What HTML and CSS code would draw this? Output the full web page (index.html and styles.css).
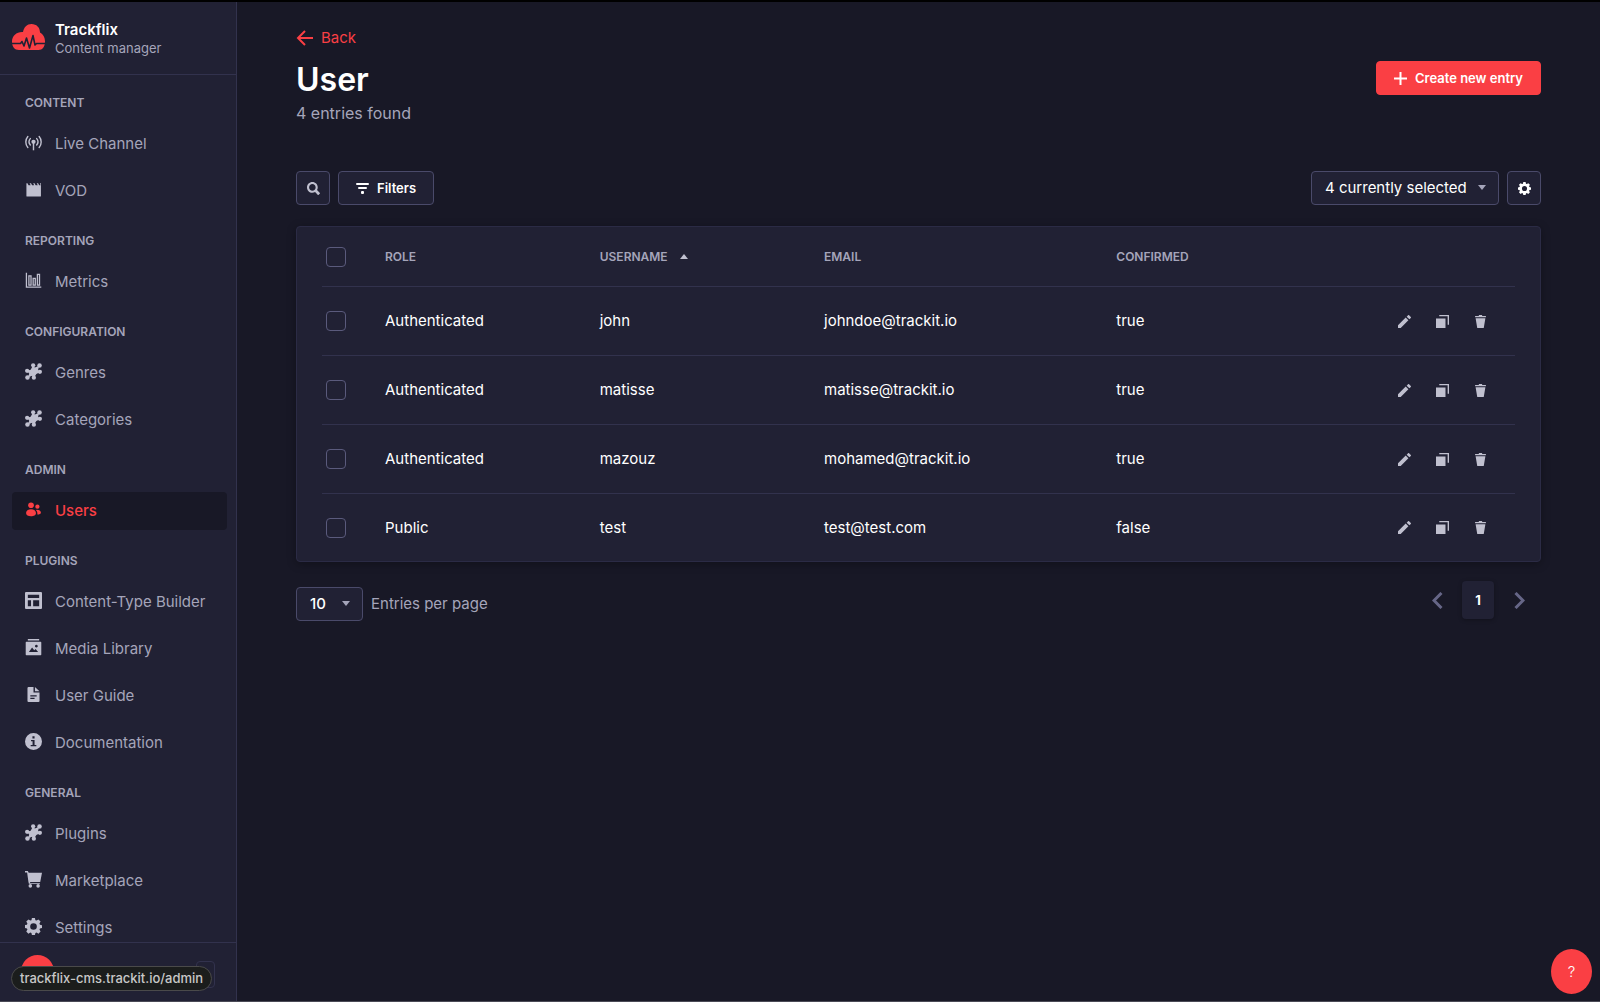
FILE: index.html
```html
<!DOCTYPE html>
<html lang="en">
<head>
<meta charset="utf-8">
<title>Trackflix - User</title>
<link rel="stylesheet" href="styles.css">
</head>
<body>
<svg class="sprite" aria-hidden="true">
  <symbol id="puzzle" viewBox="0 0 24 24"><path d="m11 4 3 2.500L20 4l-1.500 5.500L21 13l-5 2.500-3.500 5.500L10 18l-6 2.500L6 15l-3-4 5-1.500Z"/><circle cx="11.500" cy="3.300" r="3"/><circle cx="20.500" cy="3.500" r="3.200"/><circle cx="21" cy="12.500" r="3"/><circle cx="3" cy="11" r="3"/><circle cx="3.500" cy="20.500" r="3.200"/><circle cx="12.500" cy="20.800" r="3"/></symbol>
  <symbol id="gear" viewBox="0 0 24 24"><path fill-rule="evenodd" d="m9.800 0-.7 3-1.600.7-2.700-1.600-3 3 1.600 2.700-.6 1.600-3 .7v4l3 .7.6 1.600-1.600 2.700 3 3 2.700-1.600 1.600.6.7 3h4.200l.7-3 1.600-.6 2.700 1.600 3-3-1.600-2.700.7-1.600 3-.7v-4l-3-.7-.7-1.600L22 5.100l-3-3-2.700 1.600-1.600-.7-.7-3H9.800ZM12 7.300a4.700 4.700 0 1 1 0 9.400 4.700 4.700 0 0 1 0-9.400Z"/></symbol>
  <symbol id="pencil" viewBox="0 0 24 24"><path d="M23.604 3.514c.528.528.528 1.360 0 1.887l-2.622 2.607-4.990-4.990L18.600.396a1.322 1.322 0 0 1 1.887 0l3.118 3.118ZM0 24v-4.990l14.200-14.200 4.990 4.990L4.990 24H0Z"/></symbol>
  <symbol id="copy" viewBox="0 0 24 24"><path d="M0 6.500h17.500V24H0ZM6 0h18v18h-2.500V2.500H6Z"/></symbol>
  <symbol id="trash" viewBox="0 0 24 24"><path d="M3.236 6.149a.2.2 0 0 0-.197.233L6 24h12l2.960-17.618a.2.2 0 0 0-.196-.233H3.236ZM21.800 1.983c.11 0 .2.090.2.200v1.584a.2.2 0 0 1-.2.200H2.200a.2.2 0 0 1-.2-.2V2.183c0-.11.09-.2.200-.2h5.511c.9 0 1.631-1.090 1.631-1.983h5.316c0 .894.730 1.983 1.631 1.983H21.800Z"/></symbol>
  <symbol id="caret" viewBox="0 0 10 6"><path d="M0 0h10L5 6Z"/></symbol>
</svg>

<div class="app">
  <aside class="sidebar">
    <header class="brand">
      <svg class="brand-logo" viewBox="0 0 33 27" aria-hidden="true">
        <path fill="#fa3f44" d="M7 26C2.500 26 0 22.500 0 17.500 0 11.500 5 7.500 11 8 12 3 15 0 19.500 0c5 0 8.500 3.500 8.500 8.500 3 1.500 5 5 5 9 0 5-2.500 8.500-6.500 8.500Z"/>
        <path fill="none" stroke="#212134" stroke-width="1.600" stroke-linecap="round" stroke-linejoin="round" d="M0 19.500h8.500l1.500-2 2 4.500 2.500-8L17.500 24 21 11.500l2 9.500 1.500-1.500H33"/>
      </svg>
      <div class="brand-text">
        <strong class="brand-name">Trackflix</strong>
        <span class="brand-sub">Content manager</span>
      </div>
    </header>

    <nav class="nav">
      <section class="nav-section">
        <h2 class="nav-title">Content</h2>
        <ul class="nav-list">
          <li><a class="nav-link" href="#"><svg class="icon" viewBox="0 0 24 24"><circle cx="12" cy="11" r="3"/><path d="M11 12h2v11h-2z"/><path fill="none" stroke="currentColor" stroke-width="2" stroke-linecap="round" d="M7.500 6.500a7 7 0 0 0 0 9M16.500 6.500a7 7 0 0 1 0 9M4 3.500a12 12 0 0 0 0 15.500M20 3.500a12 12 0 0 1 0 15.500"/></svg>Live Channel</a></li>
          <li><a class="nav-link" href="#"><svg class="icon" viewBox="0 0 24 24"><path d="M2 3h1.500l1.500 3h3L6.500 3h2L10 6h3l-1.500-3h2L15 6h3l-1.500-3h2L20 6h2l-1-3h1.500v18a1 1 0 0 1-1 1H3a1 1 0 0 1-1-1Z"/></svg>VOD</a></li>
        </ul>
      </section>
      <section class="nav-section">
        <h2 class="nav-title">Reporting</h2>
        <ul class="nav-list">
          <li><a class="nav-link" href="#"><svg class="icon" viewBox="0 0 24 24"><path fill="none" stroke="currentColor" stroke-width="1.800" d="M2 1v20.500h21M5.500 5.500h3v13h-3zM11.500 9h3v9.500h-3zM17.500 3.500h3v15h-3z"/></svg>Metrics</a></li>
        </ul>
      </section>
      <section class="nav-section">
        <h2 class="nav-title">Configuration</h2>
        <ul class="nav-list">
          <li><a class="nav-link" href="#"><svg class="icon"><use href="#puzzle"/></svg>Genres</a></li>
          <li><a class="nav-link" href="#"><svg class="icon"><use href="#puzzle"/></svg>Categories</a></li>
        </ul>
      </section>
      <section class="nav-section">
        <h2 class="nav-title">Admin</h2>
        <ul class="nav-list">
          <li><a class="nav-link active" href="#" aria-current="page"><svg class="icon" viewBox="0 0 24 24"><circle cx="8.500" cy="6" r="4"/><circle cx="17.500" cy="8" r="3"/><path d="M1.500 17c0-3.500 3-5.500 7-5.500s7 2 7 5.500-3 4.500-7 4.500-7-1-7-4.500ZM16.500 12.500c3.500 0 6 1.800 6 4 0 1.500-2 2.500-5 2.500 0-2.500-.2-4.500-2-6Z"/></svg>Users</a></li>
        </ul>
      </section>
      <section class="nav-section">
        <h2 class="nav-title">Plugins</h2>
        <ul class="nav-list">
          <li><a class="nav-link" href="#"><svg class="icon" viewBox="0 0 24 24"><path fill-rule="evenodd" d="M1.500 0h21A1.500 1.500 0 0 1 24 1.500v21a1.500 1.500 0 0 1-1.500 1.500h-21A1.500 1.500 0 0 1 0 22.500v-21A1.500 1.500 0 0 1 1.500 0ZM4 4v4.500h16V4ZM4 11.500V20h4.500v-8.500ZM11.500 11.500V20H20v-8.500Z"/></svg>Content-Type Builder</a></li>
          <li><a class="nav-link" href="#"><svg class="icon" viewBox="0 0 24 24"><path fill-rule="evenodd" d="M4 0h16v2H4ZM2 4h20a1 1 0 0 1 1 1v17a1 1 0 0 1-1 1H2a1 1 0 0 1-1-1V5a1 1 0 0 1 1-1ZM5.500 18.500h13l-3.500-4.500-2 2-3-4ZM16 8a2 2 0 1 0 .1 0Z"/></svg>Media Library</a></li>
          <li><a class="nav-link" href="#"><svg class="icon" viewBox="0 0 24 24"><path fill-rule="evenodd" d="M5 1.500h7V9h8.500v12a1.500 1.500 0 0 1-1.500 1.500H5A1.500 1.500 0 0 1 3.500 21V3A1.500 1.500 0 0 1 5 1.500ZM7.500 13v1.800h9V13ZM7.500 16.500v1.800h6v-1.800Z"/><path d="m14 1.500 6.500 5.800H14Z"/></svg>User Guide</a></li>
          <li><a class="nav-link" href="#"><svg class="icon" viewBox="0 0 24 24"><path fill-rule="evenodd" d="M12 0a12 12 0 1 1 0 24 12 12 0 0 1 0-24ZM10.500 4.500v3.200h3V4.500ZM8.500 9.800v1.800h2.200v5.200H8v1.800h8v-1.800h-2.500v-7Z"/></svg>Documentation</a></li>
        </ul>
      </section>
      <section class="nav-section">
        <h2 class="nav-title">General</h2>
        <ul class="nav-list">
          <li><a class="nav-link" href="#"><svg class="icon"><use href="#puzzle"/></svg>Plugins</a></li>
          <li><a class="nav-link" href="#"><svg class="icon" viewBox="0 0 24 24"><path d="M0 0h4l1.200 2.500H24L21.500 15.500H7.500L7 17h14v1H5.500L4.800 15 3 2.200H0Z"/><circle cx="7.500" cy="21" r="2.500"/><circle cx="18.500" cy="21" r="2.500"/></svg>Marketplace</a></li>
          <li><a class="nav-link" href="#"><svg class="icon"><use href="#gear"/></svg>Settings</a></li>
        </ul>
      </section>
    </nav>

    <footer class="side-foot">
      <span class="avatar"></span>
      <button class="collapse" aria-label="Collapse menu"></button>
      <span class="status">trackflix-cms.trackit.io/admin</span>
    </footer>
  </aside>

  <main class="main">
    <a class="back" href="#"><svg class="back-icon" viewBox="0 0 17 16" aria-hidden="true"><path fill="none" stroke="currentColor" stroke-width="2" d="M17 8H2M9 1 2 8l7 7"/></svg>Back</a>
    <header class="page-head">
      <div>
        <h1 class="page-title">User</h1>
        <p class="page-sub">4 entries found</p>
      </div>
      <button class="btn primary"><svg class="plus" viewBox="0 0 13 13" aria-hidden="true"><path d="M5.500 0h2v5.500H13v2H7.500V13h-2V7.500H0v-2h5.500Z"/></svg>Create new entry</button>
    </header>

    <div class="toolbar">
      <button class="btn square" aria-label="Search"><svg class="icon-sm" viewBox="0 0 24 24"><path d="m23.813 20.163-5.300-5.367a9.792 9.792 0 0 0 1.312-4.867C19.825 4.455 15.375 0 9.913 0 4.450 0 0 4.455 0 9.929c0 5.473 4.450 9.928 9.912 9.928a9.757 9.757 0 0 0 5.007-1.400l5.275 5.350a.634.634 0 0 0 .913 0l2.706-2.737a.641.641 0 0 0 0-.907ZM9.910 3.867c3.338 0 6.050 2.718 6.050 6.061s-2.712 6.061-6.050 6.061c-3.337 0-6.050-2.718-6.050-6.060 0-3.344 2.713-6.062 6.050-6.062Z"/></svg></button>
      <button class="btn filters"><svg class="icon-sm" viewBox="0 0 13 13" aria-hidden="true"><rect y="1" width="13" height="2" rx="1"/><rect x="2" y="5" width="9" height="2" rx="1"/><rect x="5" y="9" width="3" height="3" rx="1"/></svg>Filters</button>
      <div class="toolbar-end">
        <div class="select fields"><select aria-label="Displayed fields"><option>4 currently selected</option></select><svg class="caret"><use href="#caret"/></svg></div>
        <button class="btn square light" aria-label="Configure the view"><svg class="icon-sm"><use href="#gear"/></svg></button>
      </div>
    </div>

    <div class="card">
      <table class="table">
        <thead>
          <tr>
            <th class="col-check"><input type="checkbox" aria-label="Select all entries"></th>
            <th class="col-role">Role</th>
            <th class="col-name">Username<svg class="sort" viewBox="0 0 8 5" aria-hidden="true"><path d="M0 5h8L4 0Z"/></svg></th>
            <th class="col-email">Email</th>
            <th>Confirmed</th>
            <th class="col-actions"></th>
          </tr>
        </thead>
        <tbody>
          <tr><td><input type="checkbox" aria-label="Select john"></td><td>Authenticated</td><td>john</td><td>johndoe@trackit.io</td><td>true</td><td><div class="actions"><button aria-label="Edit"><svg><use href="#pencil"/></svg></button><button aria-label="Duplicate"><svg><use href="#copy"/></svg></button><button aria-label="Delete"><svg><use href="#trash"/></svg></button></div></td></tr>
          <tr><td><input type="checkbox" aria-label="Select matisse"></td><td>Authenticated</td><td>matisse</td><td>matisse@trackit.io</td><td>true</td><td><div class="actions"><button aria-label="Edit"><svg><use href="#pencil"/></svg></button><button aria-label="Duplicate"><svg><use href="#copy"/></svg></button><button aria-label="Delete"><svg><use href="#trash"/></svg></button></div></td></tr>
          <tr><td><input type="checkbox" aria-label="Select mazouz"></td><td>Authenticated</td><td>mazouz</td><td>mohamed@trackit.io</td><td>true</td><td><div class="actions"><button aria-label="Edit"><svg><use href="#pencil"/></svg></button><button aria-label="Duplicate"><svg><use href="#copy"/></svg></button><button aria-label="Delete"><svg><use href="#trash"/></svg></button></div></td></tr>
          <tr><td><input type="checkbox" aria-label="Select test"></td><td>Public</td><td>test</td><td>test@test.com</td><td>false</td><td><div class="actions"><button aria-label="Edit"><svg><use href="#pencil"/></svg></button><button aria-label="Duplicate"><svg><use href="#copy"/></svg></button><button aria-label="Delete"><svg><use href="#trash"/></svg></button></div></td></tr>
        </tbody>
      </table>
    </div>

    <div class="pager">
      <div class="page-size">
        <div class="select size"><select id="page-size"><option>10</option></select><svg class="caret"><use href="#caret"/></svg></div>
        <label for="page-size">Entries per page</label>
      </div>
      <nav class="pages" aria-label="Pagination">
        <a class="page-arrow" href="#" aria-label="Previous page"><svg viewBox="0 0 11 17"><path d="M9.500 1 2 8.500 9.500 16"/></svg></a>
        <a class="page-number" href="#" aria-current="page">1</a>
        <a class="page-arrow" href="#" aria-label="Next page"><svg viewBox="0 0 11 17"><path d="M1.500 1 9 8.500 1.500 16"/></svg></a>
      </nav>
    </div>
  </main>
  <button class="help" aria-label="Help">?</button>
</div>
</body>
</html>
```
FILE: styles.css
```css
* { box-sizing: border-box; }

body {
  margin: 0;
  background: #181826;
  color: #fff;
  font: 400 15px/20px Inter, "Liberation Sans", sans-serif;
}

button, select { font: inherit; color: inherit; }
button { padding: 0; border: 0; background: none; }
a { color: inherit; text-decoration: none; }
h1, h2, p, ul { margin: 0; padding: 0; }
ul { list-style: none; }
svg { display: block; flex: none; fill: currentColor; }
.sprite { display: none; }

.app {
  display: flex;
  height: 100vh;
  border-top: 2px solid #000;
  border-bottom: 1px solid #4a4a56;
}

/* Sidebar */
.sidebar {
  display: flex;
  flex: none;
  flex-direction: column;
  width: 237px;
  border-right: 1px solid #32324d;
  background: #212134;
  color: #a5a5ba;
}
.brand {
  display: flex;
  gap: 10px;
  height: 73px;
  padding: 18px 12px 0;
  border-bottom: 1px solid #32324d;
}
.brand-logo { width: 33px; height: 27px; margin-top: 4px; }
.brand-text { display: flex; flex-direction: column; }
.brand-name { color: #fff; font-weight: 600; }
.brand-sub { font-size: 13px; line-height: 16px; }

.nav {
  display: flex;
  flex: 1;
  flex-direction: column;
  gap: 23px;
  min-height: 0;
  padding: 20px 9px 0 12px;
  overflow: hidden;
}
.nav-section { flex: none; }
.nav-title {
  margin-bottom: 14px;
  padding-left: 13px;
  font-size: 12px;
  font-weight: 600;
  line-height: 16px;
  text-transform: uppercase;
}
.nav-list { display: grid; gap: 9px; }
.nav-link {
  display: flex;
  align-items: center;
  gap: 13px;
  height: 38px;
  padding: 0 13px;
  border-radius: 4px;
}
.nav-link.active { background: #181826; color: #fa3f44; font-weight: 500; }
.icon { width: 17px; height: 17px; margin-bottom: 3px; color: #c0c0cf; }
.active .icon { color: inherit; }

.side-foot {
  position: relative;
  display: flex;
  flex: none;
  justify-content: space-between;
  height: 59px;
  padding: 12px 21px 0;
  border-top: 1px solid #32324d;
}
.avatar { width: 33px; height: 33px; border-radius: 50%; background: #fa3f44; }
.collapse { width: 19px; height: 27px; margin-top: 6px; border: 1px solid #32324d; border-radius: 4px; }
.status {
  position: absolute;
  left: 11px;
  bottom: 10px;
  height: 25px;
  padding: 0 8px;
  border: 1px solid #4a4a4a;
  border-radius: 13px;
  background: #1b1d1c;
  color: #c8c8c8;
  font-size: 13px;
  font-weight: 500;
  line-height: 23px;
}

/* Main column */
.main { flex: 1; min-width: 0; padding: 26px 59px 0; }
.back { display: inline-flex; align-items: center; gap: 8px; color: #fa3f44; }
.back-icon { width: 17px; height: 16px; }
.page-head { display: flex; align-items: flex-start; justify-content: space-between; margin-top: 8px; }
.page-title { font-size: 32px; font-weight: 600; line-height: 42px; }
.page-sub { color: #a5a5ba; font-size: 16px; line-height: 24px; }

.btn {
  display: inline-flex;
  align-items: center;
  justify-content: center;
  gap: 8px;
  height: 34px;
  border: 1px solid #4a4a6a;
  border-radius: 4px;
  background: #212134;
  font-size: 13px;
  font-weight: 600;
}
.primary { gap: 8px; margin-top: 2px; padding: 0 17px; border-color: #fa3f44; background: #fa3f44; }
.plus { width: 13px; height: 13px; }
.square { width: 34px; color: #c0c0cf; }
.light { color: #fff; }
.filters { padding: 0 17px; }
.icon-sm { width: 13px; height: 13px; }

.toolbar { display: flex; gap: 8px; margin-top: 46px; }
.toolbar-end { display: flex; gap: 8px; margin-left: auto; }

.select {
  display: grid;
  align-items: center;
  height: 34px;
  border: 1px solid #4a4a6a;
  border-radius: 4px;
  background: #212134;
}
.select select {
  grid-area: 1 / 1;
  width: 100%;
  height: 32px;
  padding: 0 13px;
  border: 0;
  background: none;
  appearance: none;
}
.caret { grid-area: 1 / 1; justify-self: end; width: 8px; height: 5px; margin: 0 12px 2px 0; color: #a5a5ba; pointer-events: none; }
.fields { width: 188px; }
.size { width: 67px; font-weight: 500; }

/* Table */
.card {
  margin-top: 21px;
  padding: 0 25px;
  border: 1px solid #2b2b45;
  border-radius: 4px;
  background: #212134;
  box-shadow: 0 2px 10px rgba(0, 0, 0, .3);
}
.table { width: 100%; border-collapse: separate; border-spacing: 0; table-layout: fixed; }
.table th, .table td { padding: 0 16px; border-bottom: 1px solid #32324d; text-align: left; }
.table th { height: 60px; color: #a5a5ba; font-size: 12px; font-weight: 600; text-transform: uppercase; }
.table td { height: 69px; }
.table tbody tr:last-child td { height: 67px; border-bottom: 0; }
.table th:first-child, .table td:first-child { padding: 0 4px; }
.table td:last-child { padding-right: 22px; }
.col-check { width: 47px; }
.col-role { width: 18%; }
.col-name { width: 18.8%; }
.col-email { width: 24.5%; }
.col-actions { width: 13%; }
.sort { display: inline-block; width: 8px; height: 5px; margin-left: 12px; vertical-align: 2px; color: #c0c0cf; }
.table input {
  display: block;
  width: 20px;
  height: 20px;
  margin: 0;
  border: 1px solid #5a5a7c;
  border-radius: 4px;
  background: #212134;
  appearance: none;
}
.actions { display: flex; justify-content: flex-end; gap: 12px; }
.actions button { display: grid; place-items: center; width: 26px; height: 25px; color: #c0c0cf; }
.actions svg { width: 13px; height: 13px; }

/* Pagination */
.pager { display: flex; align-items: flex-start; justify-content: space-between; padding-top: 19px; }
.page-size { display: flex; align-items: center; gap: 8px; margin-top: 6px; color: #a5a5ba; }
.page-size select { color: #fff; }
.pages { display: flex; gap: 6px; padding-right: 3px; }
.page-arrow { display: grid; place-items: center; width: 38px; height: 38px; color: #666687; }
.page-arrow svg { width: 11px; height: 17px; fill: none; stroke: currentColor; stroke-width: 3; }
.page-number {
  width: 32px;
  height: 38px;
  border-radius: 4px;
  background: #212134;
  box-shadow: 0 1px 4px rgba(0, 0, 0, .3);
  font-size: 13px;
  font-weight: 700;
  line-height: 38px;
  text-align: center;
}

.help {
  position: fixed;
  right: 8px;
  bottom: 8px;
  width: 41px;
  height: 45px;
  border-radius: 50%;
  background: #fa3f44;
  font-weight: 300;
}
```
